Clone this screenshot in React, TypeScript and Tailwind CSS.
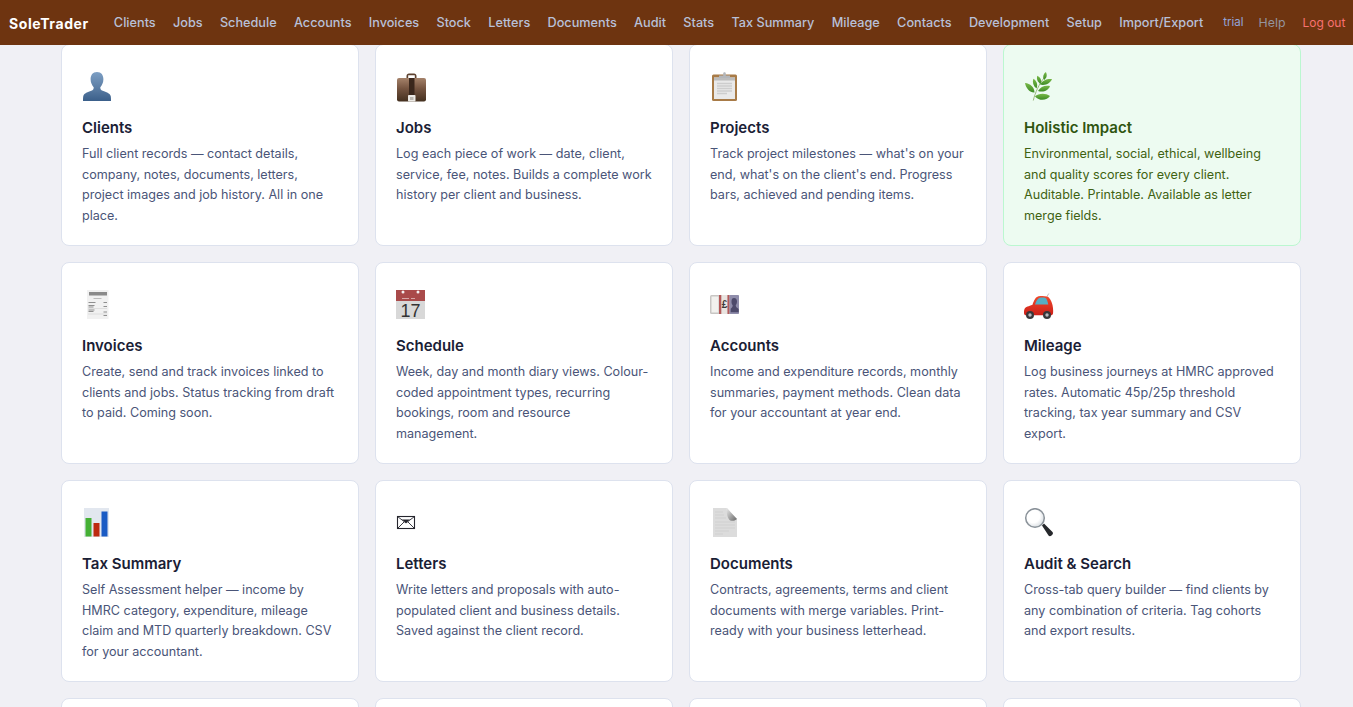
import React from 'react';

// Hand-drawn stand-ins for the colour emoji on each card
const UserIcon = () => (
  <svg viewBox="0 0 30 30" className="w-[30px] h-[30px]">
    <defs>
      <linearGradient id="userFill" x1="0" y1="0" x2="0" y2="1">
        <stop offset="0" stopColor="#7d9fc4" />
        <stop offset="0.55" stopColor="#5b7da4" />
        <stop offset="1" stopColor="#3a5f8a" />
      </linearGradient>
    </defs>
    <path
      d="M15 0c4.400 0 6.400 3.200 6.400 7.200 0 3.400-1.500 6.200-3.100 8 0 1.700.5 2.800 2.400 3.600 3.600 1.400 7 2.200 8 5.300.3 1.300.3 3.900.3 4.900H1c0-1 0-3.600.3-4.900 1-3.100 4.400-3.900 8-5.300 1.900-.8 2.400-1.900 2.400-3.600-1.600-1.800-3.100-4.600-3.100-8C8.600 3.200 10.600 0 15 0z"
      fill="url(#userFill)"
    />
  </svg>
);

const BriefcaseIcon = () => (
  <svg viewBox="0 0 30 30" className="w-[30px] h-[30px]">
    <defs>
      <linearGradient id="caseFill" x1="0" y1="0" x2="0" y2="1">
        <stop offset="0" stopColor="#a5826a" />
        <stop offset="0.45" stopColor="#755440" />
        <stop offset="1" stopColor="#44301f" />
      </linearGradient>
    </defs>
    <path d="M10.500 7V4C10.500 2.500 11.500 1.500 13 1.500h5C19.500 1.500 20.500 2.500 20.500 4v3h-1.700V3.300h-6.600V7z" fill="#5d4230" />
    <rect x="1" y="6" width="29" height="23.500" rx="2" fill="url(#caseFill)" />
    <rect x="13" y="6" width="5.500" height="17" fill="#3a271c" />
    <rect x="12" y="23" width="7.500" height="6.500" rx="0.800" fill="#ece9e4" />
    <rect x="14" y="25" width="3.500" height="3" fill="#b9b5ae" />
  </svg>
);

const ClipboardIcon = () => (
  <svg viewBox="0 0 30 30" className="w-[30px] h-[30px]">
    <rect x="2" y="2.500" width="25" height="26.500" rx="1.500" fill="#a87b47" />
    <rect x="4" y="5.500" width="21" height="21.500" fill="#e9e9e9" />
    <rect x="4" y="5.500" width="21" height="3" fill="#bcbcbc" />
    <path d="M7 11.500h15M7 14h15M7 16.500h15M7 19h15M7 21.500h10" stroke="#cdcdcd" strokeWidth="1.500" />
    <path d="M9 6V3.500h4.200V1.500c0-1.800 2.600-1.800 2.600 0v2H20V6z" fill="#b3b6ba" />
  </svg>
);

const HerbIcon = () => (
  <svg viewBox="0 0 30 30" className="w-[30px] h-[30px]">
    <defs>
      <linearGradient id="leafFill" x1="0" y1="0" x2="0" y2="1">
        <stop offset="0" stopColor="#79b948" />
        <stop offset="1" stopColor="#3c8a24" />
      </linearGradient>
    </defs>
    <path d="M9.300 28.500C11 21 15 12 21 4.500" stroke="#9bb87c" strokeWidth="1" fill="none" />
    <g fill="url(#leafFill)">
      <path d="M11 24.500c3-3 10-4 15-.5-2.500 4-10 6-15 .5z" />
      <path d="M14 19c2.500-4.500 7-6 12-5-1.500 4.300-6.500 6.800-12 5z" />
      <path d="M16 12.500c2-4 7-6 12-5.500-1.500 4-6.500 7-12 5.500z" />
      <path d="M20 8c-1.500-2.800-1-6 1.800-8 1.700 3 1 6-1.800 8z" />
      <path d="M16.500 12c-2.800-2-4.300-5-3.200-8.300 3.200 1.500 4.900 4.800 3.200 8.300z" />
      <path d="M12.500 16.500c-3.300-2.500-4.300-6-3.200-9.700 3.300 2 4.900 5.700 3.200 9.700z" />
      <path d="M10.500 20.500C6 20.800 2 16.500 1 11c5.300.5 9.300 4 9.500 9.500z" />
    </g>
  </svg>
);

const ReceiptIcon = () => (
  <svg viewBox="0 0 30 30" className="w-[30px] h-[30px]">
    <rect x="5" y="0" width="21.500" height="29" fill="#f1f1f1" />
    <rect x="7" y="2" width="18" height="3.500" fill="#8a8a8a" />
    <rect x="11.500" y="8" width="8" height="1" fill="#bcbcbc" />
    <path d="M6.500 12.500h7M21.500 12.500h3.500M6.500 15.500h6M6.500 17h5M21.500 16.500h3.500M6.500 20h6M6.500 21.500h5M21.500 22h3.500M21.500 25.500h3.500" stroke="#8f8f8f" strokeWidth="1" />
    <path d="M6 18.500h19M6 24h19" stroke="#d2d2d2" strokeWidth="0.600" />
  </svg>
);

const CalendarIcon = () => (
  <svg viewBox="0 0 30 30" className="w-[30px] h-[30px]">
    <rect x="0" y="0" width="29" height="29" fill="#d8d8d8" />
    <rect x="0" y="0" width="29" height="11" fill="#a94a4a" />
    <circle cx="7" cy="2" r="1.500" fill="#f4f0f0" />
    <circle cx="22" cy="2" r="1.500" fill="#f4f0f0" />
    <path d="M6 8.500h7M15 8.500h4" stroke="#d7a6a6" strokeWidth="1.200" />
    <text x="14.500" y="26.500" textAnchor="middle" fontSize="18" fill="#333" fontFamily="Liberation Sans, sans-serif">17</text>
  </svg>
);

const BanknoteIcon = () => (
  <svg viewBox="0 0 30 30" className="w-[30px] h-[30px]">
    <rect x="0" y="5" width="29" height="19" rx="1.500" fill="#c8c6c4" />
    <rect x="1.500" y="6.500" width="7" height="16" fill="#f2f1ee" />
    <rect x="9" y="5" width="2.500" height="19" fill="#b45858" />
    <rect x="11.500" y="5" width="6" height="19" fill="#e9e4e0" />
    <rect x="17.500" y="5" width="2" height="19" fill="#b45858" />
    <rect x="19.500" y="5" width="9.500" height="19" rx="1" fill="#8f8dab" />
    <path d="M24 8c2.200 0 3 1.800 3 3.500 0 1.500-.6 3-1.300 3.800.2 2.500 2 2.500 3 4v3h-8v-3.500c1.200-1 2-1.700 2-3.500-.8-.8-1.200-2.200-1.200-3.800 0-1.700.5-3.500 2.500-3.500z" fill="#4d4a6b" />
    <text x="14.500" y="18" textAnchor="middle" fontSize="10" fontWeight="700" fill="#3d3a3a" fontFamily="Liberation Sans, sans-serif">£</text>
  </svg>
);

const CarIcon = () => (
  <svg viewBox="0 0 30 30" className="w-[30px] h-[30px]">
    <defs>
      <linearGradient id="carBody" x1="0" y1="0" x2="0" y2="1">
        <stop offset="0" stopColor="#f0492c" />
        <stop offset="1" stopColor="#cc1f18" />
      </linearGradient>
    </defs>
    <path d="M23 6.500l1.800-3" stroke="#a5a5a5" strokeWidth="0.700" />
    <path d="M0 23c-.2-3 .5-5.500 3.500-6.500 1.500-.5 3-1 5-1.800C10 10.500 11.500 7 14.500 6.300c3-.5 6-.4 8.500.2 2.500.6 4.500 4.500 5.500 8.500.7 3 .8 6 .5 8.500-.2 1-1 1.800-2 1.800H1.500C.7 25.300 0 24 0 23z" fill="url(#carBody)" />
    <path d="M11 14.500c1-3 2.500-6 4.500-6.700 2-.4 4.500-.4 6 .1 1.200.4 2.200 3.500 2.800 6.600z" fill="#55aec4" />
    <circle cx="6" cy="25" r="4" fill="#37373a" />
    <circle cx="6" cy="25" r="1.700" fill="#b9b9bd" />
    <circle cx="23" cy="25" r="4" fill="#37373a" />
    <circle cx="23" cy="25" r="1.700" fill="#b9b9bd" />
  </svg>
);

const ChartIcon = () => (
  <svg viewBox="0 0 30 30" className="w-[30px] h-[30px]">
    <rect x="2" y="0" width="25" height="29" fill="#e2e7ef" />
    <rect x="3.500" y="10" width="6" height="18.500" fill="#45b035" />
    <rect x="11.500" y="15" width="6" height="13.500" fill="#bd2a10" />
    <rect x="19.500" y="3.500" width="6" height="25" fill="#1a5bc4" />
  </svg>
);

const EnvelopeIcon = () => (
  <svg viewBox="0 0 30 30" className="w-[30px] h-[30px]">
    <rect x="1.500" y="8.500" width="17" height="12" fill="#fff" stroke="#26262e" strokeWidth="1.100" />
    <path d="M1.500 8.500l8.500 6.500 8.500-6.500M1.500 20.500l6.500-6.500M18.500 20.500L12 14" fill="none" stroke="#26262e" strokeWidth="0.900" />
    <path d="M6 11.500h8l-4 3.500z" fill="#26262e" />
  </svg>
);

const DocumentIcon = () => (
  <svg viewBox="0 0 30 30" className="w-[30px] h-[30px]">
    <defs>
      <linearGradient id="docFold" x1="0" y1="0" x2="1" y2="1">
        <stop offset="0" stopColor="#ececec" />
        <stop offset="1" stopColor="#666" />
      </linearGradient>
    </defs>
    <path d="M3 0h14l10 11v18H3z" fill="#dcdcdc" />
    <path d="M5 4h8M5 7h9M5 10h11M5 14h20M5 17h20M5 20h20M5 23h14M5 26h8" stroke="#d0d0d0" strokeWidth="1" />
    <path d="M16.500 0c0 5 1 10 3 12 2 1.500 5 1 7.500-1z" fill="url(#docFold)" />
  </svg>
);

const SearchIcon = () => (
  <svg viewBox="0 0 30 30" className="w-[30px] h-[30px]">
    <defs>
      <radialGradient id="lensFill" cx="0.400" cy="0.400" r="0.700">
        <stop offset="0.500" stopColor="#ffffff" />
        <stop offset="1" stopColor="#cfd5da" />
      </radialGradient>
    </defs>
    <path d="M18 17.500l2-2 8.500 8.500c.7.800.6 2-.2 2.700l-1.100 1.100c-.8.700-2 .6-2.700-.2z" fill="#26282c" />
    <circle cx="11" cy="10" r="9.300" fill="url(#lensFill)" stroke="#8a9299" strokeWidth="1.500" />
  </svg>
);

interface Feature {
  title: string;
  text: string;
  icon: React.ReactNode;
  green?: boolean;
}

const features: Feature[] = [
  { title: 'Clients', icon: <UserIcon />, text: 'Full client records — contact details, company, notes, documents, letters, project images and job history. All in one place.' },
  { title: 'Jobs', icon: <BriefcaseIcon />, text: 'Log each piece of work — date, client, service, fee, notes. Builds a complete work history per client and business.' },
  { title: 'Projects', icon: <ClipboardIcon />, text: "Track project milestones — what's on your end, what's on the client's end. Progress bars, achieved and pending items." },
  { title: 'Holistic Impact', icon: <HerbIcon />, green: true, text: 'Environmental, social, ethical, wellbeing and quality scores for every client. Auditable. Printable. Available as letter merge fields.' },
  { title: 'Invoices', icon: <ReceiptIcon />, text: 'Create, send and track invoices linked to clients and jobs. Status tracking from draft to paid. Coming soon.' },
  { title: 'Schedule', icon: <CalendarIcon />, text: 'Week, day and month diary views. Colour-coded appointment types, recurring bookings, room and resource management.' },
  { title: 'Accounts', icon: <BanknoteIcon />, text: 'Income and expenditure records, monthly summaries, payment methods. Clean data for your accountant at year end.' },
  { title: 'Mileage', icon: <CarIcon />, text: 'Log business journeys at HMRC approved rates. Automatic 45p/25p threshold tracking, tax year summary and CSV export.' },
  { title: 'Tax Summary', icon: <ChartIcon />, text: 'Self Assessment helper — income by HMRC category, expenditure, mileage claim and MTD quarterly breakdown. CSV for your accountant.' },
  { title: 'Letters', icon: <EnvelopeIcon />, text: 'Write letters and proposals with auto-populated client and business details. Saved against the client record.' },
  { title: 'Documents', icon: <DocumentIcon />, text: 'Contracts, agreements, terms and client documents with merge variables. Print-ready with your business letterhead.' },
  { title: 'Audit & Search', icon: <SearchIcon />, text: 'Cross-tab query builder — find clients by any combination of criteria. Tag cohorts and export results.' },
];

const navLinks = ['Clients', 'Jobs', 'Schedule', 'Accounts', 'Invoices', 'Stock', 'Letters', 'Documents', 'Audit', 'Stats', 'Tax Summary', 'Mileage', 'Contacts', 'Development', 'Setup', 'Import/Export'];

const FeatureCard: React.FC<{ feature: Feature }> = ({ feature }) => (
  <div className={`h-[202px] rounded-lg border px-5 pt-[27px] ${feature.green ? 'bg-[#edfbf1] border-[#bbf7d0]' : 'bg-white border-[#dde2ee]'}`}>
    <div className="h-[44px]">{feature.icon}</div>
    <h3 className={`text-[15px] leading-[24px] font-semibold mb-1 ${feature.green ? 'text-[#2f5510]' : 'text-[#1a2035]'}`}>{feature.title}</h3>
    <p className={`text-[12.6px] leading-[20.55px] ${feature.green ? 'text-[#3f6212]' : 'text-[#4a5578]'}`}>{feature.text}</p>
  </div>
);

export default function App() {
  return (
    <div className="h-screen overflow-hidden bg-[#f0f0f5] font-['Inter',sans-serif]">
      <nav className="relative z-10 h-[45px] pt-px bg-[#6e3410] flex items-center pl-[9px] pr-2 whitespace-nowrap">
        <span className="text-white font-bold text-[14px] tracking-[0.6px] mr-[25px]">SoleTrader</span>
        <div className="flex items-center gap-[17.3px]">
          {navLinks.map((l) => (
            <a key={l} href="#" className="text-[#b8c0d8] text-[12.7px] font-medium">{l}</a>
          ))}
        </div>
        <span className="ml-5 text-[#93a5d8] text-[11.5px]">trial</span>
        <a href="#" className="ml-[15px] text-[#94949e] text-[12.3px]">Help</a>
        <a href="#" className="ml-[17px] text-[#f87171] text-[12px]">Log out</a>
      </nav>
      <main className="-mt-px ml-[61px] w-[1240px] grid grid-cols-4 gap-4">
        {features.map((f) => (
          <FeatureCard key={f.title} feature={f} />
        ))}
        <div className="h-[202px] rounded-lg border border-[#dde2ee] bg-white" />
        <div className="h-[202px] rounded-lg border border-[#dde2ee] bg-white" />
        <div className="h-[202px] rounded-lg border border-[#dde2ee] bg-white" />
        <div className="h-[202px] rounded-lg border border-[#dde2ee] bg-white" />
      </main>
    </div>
  );
}
